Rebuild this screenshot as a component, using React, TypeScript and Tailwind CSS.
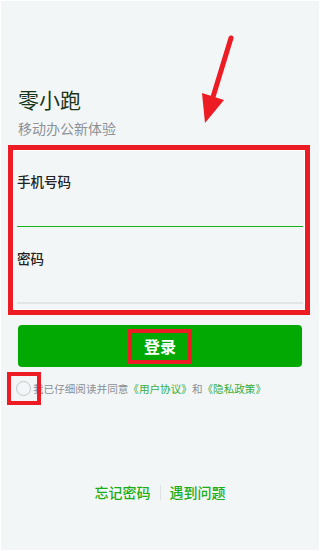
const cjk = { fontFamily: '"Noto Sans CJK SC", "Noto Sans", sans-serif' };

function Arrow() {
  return (
    <svg className="pointer-events-none absolute left-0 top-0" width="320" height="140" viewBox="0 0 320 140">
      <line x1="230" y1="37" x2="212" y2="96" stroke="#ed1c24" strokeWidth="5" strokeLinecap="round" />
      <polygon points="201,92 223,99 204,122" fill="#ed1c24" />
    </svg>
  );
}

export default function App() {
  return (
    <div className="h-[551px] w-[320px] bg-white p-px" style={cjk}>
      <div className="relative flex h-full flex-col bg-[#f3f6f7]">
        <Arrow />

        <div className="pl-[17px] pt-[84px] text-[21px] leading-[28px] text-[#1a361a]">零小跑</div>
        <div className="pl-[17px] pt-[5px] text-[14px] leading-[20px] text-[#8e9296]">移动办公新体验</div>

        <div className="ml-[7px] mt-[7px] w-[302px] border-[5px] border-[#ed1c24]">
          <div className="border border-white pb-[5px] pl-[3px] pr-[1px] pt-[20px]">
            <div className="text-[13.5px] font-medium leading-[20px] text-[#222]">手机号码</div>
            <div className="mt-[35px] h-px bg-[#17b317]" />
            <div className="mt-[21px] text-[13.5px] font-medium leading-[20px] text-[#222]">密码</div>
            <div className="mt-[34px] h-[2px] bg-[#e2e4e6]" />
          </div>
        </div>

        <div className="mx-[17px] mt-[10px] flex h-[42px] items-center justify-center rounded-[4px] bg-[#03a903]">
          <span className="flex h-[35px] w-[64px] items-center justify-center border-4 border-[#ed1c24] text-[16px] font-bold text-white">
            登录
          </span>
        </div>

        <div className="relative mt-[5px] flex h-[33px] items-center">
          <span className="ml-[15px] h-[15px] w-[15px] rounded-full border border-[#c4c7cb]" />
          <span className="ml-[2px] text-[10.6px] leading-[14px] text-[#8a8f98]">
            我已仔细阅读并同意<span className="text-[#3aad3a]">《用户协议》</span>和<span className="text-[#3aad3a]">《隐私政策》</span>
          </span>
          <span className="absolute left-[6px] top-0 h-[33px] w-[34px] border-4 border-[#ed1c24]" />
        </div>

        <div className="mt-[77px] flex items-center justify-center text-[14px] font-medium leading-[20px] text-[#19ad19]">
          <span>忘记密码</span>
          <span className="mx-[9px] h-[15px] w-px bg-[#dfe2e4]" />
          <span>遇到问题</span>
        </div>
      </div>
    </div>
  );
}
